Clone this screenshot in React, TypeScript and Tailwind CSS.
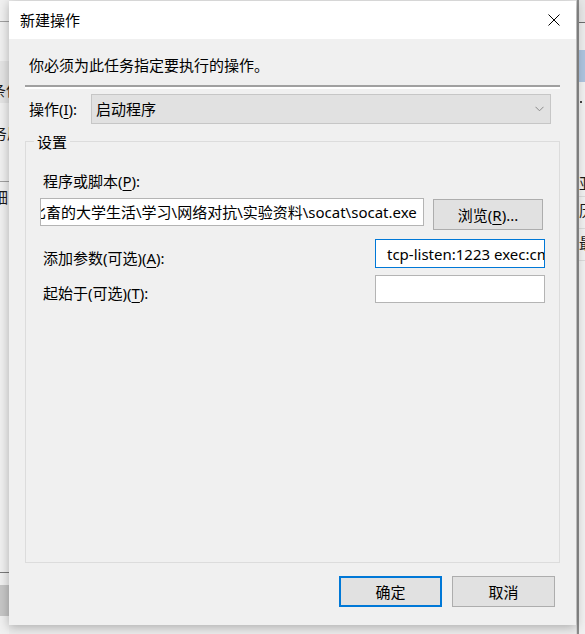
import React from "react";

function Key({ k }: { k: string }) {
  return <span className="underline underline-offset-[3px] decoration-1">{k}</span>;
}

function LeftWindow() {
  return (
    <div className="absolute left-0 top-0 w-[9px] h-full overflow-hidden bg-[#f0f0f0] flex flex-col whitespace-nowrap leading-[18px] text-[#1a1a1a]">
      <div className="h-[22px] shrink-0 border-b border-[#a0a0a0]" />
      <div className="h-[39px] shrink-0" />
      <div className="h-[42px] shrink-0 bg-[#e4e4e4] pt-[20px]">
        <span className="block ml-[-9px]">条件</span>
      </div>
      <div className="h-[78px] shrink-0 pt-[21px]">
        <span className="block ml-[-8px]">务属</span>
      </div>
      <div className="h-px shrink-0 bg-[#a0a0a0]" />
      <div className="h-[24px] shrink-0 pt-[6px]">
        <span className="block ml-[-7px]">细</span>
      </div>
      <div className="h-[366px] shrink-0" />
      <div className="h-px shrink-0 bg-[#7a7a7a]" />
      <div className="h-[12px] shrink-0" />
      <div className="h-[31px] shrink-0 bg-[#c6c6c6]" />
    </div>
  );
}

function RightWindow() {
  return (
    <div className="absolute left-[576px] top-0 w-[9px] h-full flex">
      <div className="w-px h-full bg-[#d6d6d6]" />
      <div className="w-[2px] h-full bg-[#8c8c8c]" />
      <div className="flex-1 h-full overflow-hidden flex flex-col whitespace-nowrap leading-[18px] text-[#1a1a1a] bg-[#f0f0f0]">
        <div className="h-[23px] shrink-0 bg-[#e6e6e6] border-b border-[#6e6e6e]" />
        <div className="h-[27px] shrink-0 bg-[#ececec]" />
        <div className="h-[32px] shrink-0 bg-[#adc3de]" />
        <div className="h-[19px] shrink-0" />
        <div className="h-[2px] w-[2px] ml-[1px] shrink-0 bg-[#444]" />
        <div className="h-[71px] shrink-0" />
        <div className="h-[23px] shrink-0 border-b border-[#dadada]">
          <span className="block">亚</span>
        </div>
        <div className="h-[32px] shrink-0 pt-[4px] border-b border-[#dadada]">
          <span className="block">历</span>
        </div>
        <div className="h-[32px] shrink-0 pt-[5px] border-b border-[#dadada]">
          <span className="block">最</span>
        </div>
      </div>
    </div>
  );
}

export default function App() {
  return (
    <div className="relative w-[585px] h-[634px] overflow-hidden bg-[#ececec] font-['Noto_Sans','Noto_Sans_CJK_SC',sans-serif] text-[15px] text-black">
      <LeftWindow />
      <RightWindow />

      {/* dialog */}
      <div className="absolute left-[9px] top-[1px] w-[567px] h-[624px] flex flex-col bg-[#f0f0f0] shadow-[0_2px_10px_rgba(0,0,0,0.28)]">
        <div className="h-[38px] shrink-0 bg-white flex items-center justify-between pl-[11px] pr-[16px]">
          <span className="leading-[18px]">新建操作</span>
          <svg width="12" height="12" viewBox="0 0 12 12">
            <path d="M0.5 0.5 L11.5 11.5 M11.5 0.5 L0.5 11.5" stroke="#000" strokeWidth="1" fill="none" />
          </svg>
        </div>

        <div className="flex-1 flex flex-col px-[16px] pt-[17px]">
          <p className="ml-[4px] leading-[18px]">你必须为此任务指定要执行的操作。</p>
          <div className="mt-[11px] border-t-2 border-b-2 border-t-[#a0a0a0] border-b-white" />

          <div className="mt-[5px] flex items-center h-[30px]">
            <span className="ml-[4px] w-[62px] leading-[18px]">
              操作(<Key k="I" />):
            </span>
            <div className="w-[460px] h-[30px] bg-[#e1e1e1] border border-[#c6c6c6] flex items-center justify-between pl-[4px] pr-[6px]">
              <span className="leading-[18px]">启动程序</span>
              <svg width="9" height="6" viewBox="0 0 9 6">
                <path d="M0.5 0.8 L4.5 4.8 L8.5 0.8" stroke="#8a8a8a" strokeWidth="1" fill="none" />
              </svg>
            </div>
          </div>

          {/* settings group */}
          <div className="relative mt-[17px] h-[422px] border border-[#dcdcdc] pl-[14px] pr-[14px] pt-[30px]">
            <span className="absolute left-[8px] top-[-9px] px-[3px] bg-[#f0f0f0] leading-[18px]">设置</span>

            <p className="ml-[3px] leading-[18px]">
              程序或脚本(<Key k="P" />):
            </p>
            <div className="mt-[8px] flex items-start">
              <div className="w-[384px] h-[28px] bg-white border border-[#b4b4b4] overflow-hidden flex items-center whitespace-nowrap">
                <span className="ml-[-10px] leading-[18px]">比畜的大学生活\学习\网络对抗\实验资料\socat\socat.exe</span>
              </div>
              <button className="ml-[9px] mt-px w-[110px] h-[31px] bg-[#e1e1e1] border border-[#adadad] leading-[18px]">
                浏览(<Key k="R" />)...
              </button>
            </div>

            <div className="mt-[9px] flex items-start justify-between">
              <span className="ml-[3px] mt-[10px] leading-[18px]">
                添加参数(可选)(<Key k="A" />):
              </span>
              <div className="w-[170px] h-[29px] bg-white border border-[#0078d7] overflow-hidden flex items-center whitespace-nowrap pl-[11px]">
                <span className="leading-[18px]">tcp-listen:1223 exec:cmd.exe,pty,stderr</span>
              </div>
            </div>

            <div className="mt-[7px] flex items-start justify-between">
              <span className="ml-[3px] mt-[9px] leading-[18px]">
                起始于(可选)(<Key k="T" />):
              </span>
              <div className="w-[170px] h-[28px] bg-white border border-[#b4b4b4]" />
            </div>
          </div>

          <div className="mt-[13px] mr-[5px] flex justify-end gap-[10px]">
            <button className="w-[103px] h-[31px] bg-[#e1e1e1] border-2 border-[#0078d7] leading-[18px]">确定</button>
            <button className="w-[103px] h-[31px] bg-[#e1e1e1] border border-[#adadad] leading-[18px]">取消</button>
          </div>
        </div>
      </div>
    </div>
  );
}
